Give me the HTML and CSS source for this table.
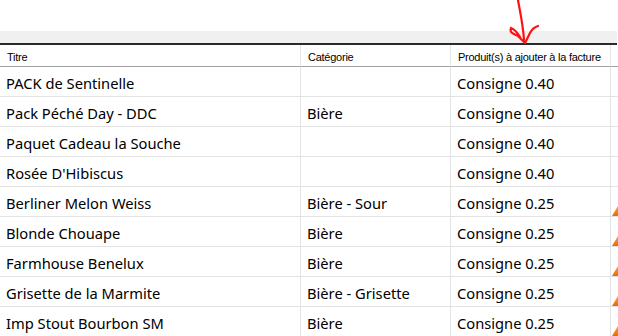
FILE: index.html
```html
<!DOCTYPE html>
<html>
<head>
<meta charset="utf-8">
<link rel="stylesheet" href="styles.css">
</head>
<body>
<div class="page">
  <div class="topgap"></div>
  <div class="band"></div>
  <div class="grid">
    <div class="hcell">Titre</div>
    <div class="hcell">Catégorie</div>
    <div class="hcell">Produit(s) à ajouter à la facture</div>
    <div class="hcell last"></div>

    <div class="cell">PACK de Sentinelle</div><div class="cell"></div><div class="cell">Consigne 0.40</div><div class="cell last"></div>
    <div class="cell">Pack Péché Day - DDC</div><div class="cell">Bière</div><div class="cell">Consigne 0.40</div><div class="cell last"></div>
    <div class="cell">Paquet Cadeau la Souche</div><div class="cell"></div><div class="cell">Consigne 0.40</div><div class="cell last"></div>
    <div class="cell">Rosée D'Hibiscus</div><div class="cell"></div><div class="cell">Consigne 0.40</div><div class="cell last"></div>
    <div class="cell">Berliner Melon Weiss</div><div class="cell">Bière - Sour</div><div class="cell">Consigne 0.25</div><div class="cell last"><svg class="warn" width="12" height="10" viewBox="0 0 12 10"><defs><linearGradient id="g1" x1="0" y1="0" x2="0" y2="1"><stop offset="0" stop-color="#ffa040"/><stop offset="1" stop-color="#e86a00"/></linearGradient></defs><polygon points="0,10 6,0 12,10" fill="url(#g1)"/></svg></div>
    <div class="cell">Blonde Chouape</div><div class="cell">Bière</div><div class="cell">Consigne 0.25</div><div class="cell last"><svg class="warn" width="12" height="10" viewBox="0 0 12 10"><polygon points="0,10 6,0 12,10" fill="url(#g1)"/></svg></div>
    <div class="cell">Farmhouse Benelux</div><div class="cell">Bière</div><div class="cell">Consigne 0.25</div><div class="cell last"><svg class="warn" width="12" height="10" viewBox="0 0 12 10"><polygon points="0,10 6,0 12,10" fill="url(#g1)"/></svg></div>
    <div class="cell">Grisette de la Marmite</div><div class="cell">Bière - Grisette</div><div class="cell">Consigne 0.25</div><div class="cell last"><svg class="warn" width="12" height="10" viewBox="0 0 12 10"><polygon points="0,10 6,0 12,10" fill="url(#g1)"/></svg></div>
    <div class="cell">Imp Stout Bourbon SM</div><div class="cell">Bière</div><div class="cell">Consigne 0.25</div><div class="cell last"><svg class="warn" width="12" height="10" viewBox="0 0 12 10"><polygon points="0,10 6,0 12,10" fill="url(#g1)"/></svg></div>
  </div>
  <svg class="arrow" width="618" height="50" viewBox="0 0 618 50">
    <path d="M518,0 C520,12 523,24 524,40" fill="none" stroke="#ff1010" stroke-width="2.2" stroke-linecap="round"/>
    <path d="M511,28 C509,33 514,34 518,36 L525,43 L530,33 C532,29 535,27 538,26 M511,28 C514,29 517,32 520,37" fill="none" stroke="#ff1010" stroke-width="2.2" stroke-linecap="round" stroke-linejoin="round"/>
  </svg>
</div>
</body>
</html>
```
FILE: styles.css
```css
html, body {
  margin: 0;
  padding: 0;
  background: #fff;
}
.page {
  position: relative;
  width: 618px;
  height: 336px;
  overflow: hidden;
}
.topgap {
  height: 31px;
}
.band {
  height: 12px;
  background: #f0f0f0;
  border-bottom: 2px solid #2a2a2a;
  margin-right: 1px;
}
.grid {
  display: grid;
  grid-template-columns: 301px 150px 160px 7px;
}
.hcell {
  box-sizing: border-box;
  height: 22px;
  border-right: 1px solid #e5e5e5;
  border-bottom: 1px solid #a0a0a0;
  font-family: "Liberation Sans", Arial, sans-serif;
  font-size: 11px;
  letter-spacing: -0.25px;
  line-height: 22px;
  padding-top: 1px;
  padding-left: 7px;
  color: #000;
  white-space: nowrap;
  overflow: hidden;
}
.cell {
  box-sizing: border-box;
  height: 30px;
  border-right: 1px solid #e3e3e3;
  border-bottom: 1px solid #e3e3e3;
  font-family: "Noto Sans", "Open Sans", sans-serif;
  font-size: 14.7px;
  line-height: 29px;
  padding-top: 2px;
  padding-left: 6px;
  color: #000;
  white-space: nowrap;
  overflow: hidden;
  position: relative;
}
.last {
  border-right: none;
  padding-left: 0;
}
.warn {
  position: absolute;
  left: 1px;
  bottom: 0px;
}
.arrow {
  position: absolute;
  left: 0;
  top: 0;
}
```
